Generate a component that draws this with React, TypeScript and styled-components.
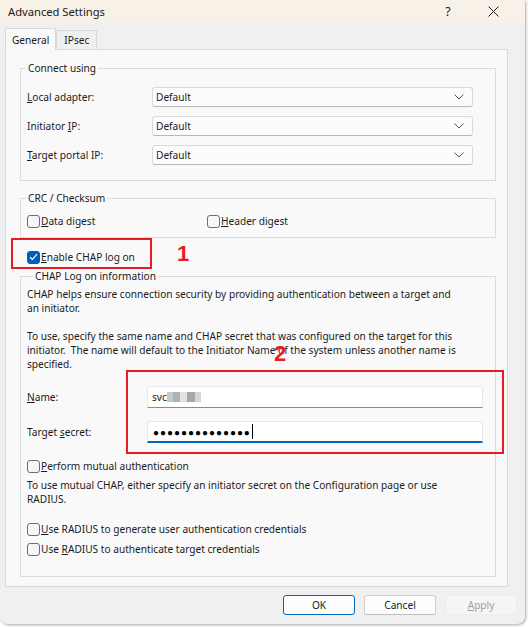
import React from 'react';
import styled, { createGlobalStyle } from 'styled-components';

const Global = createGlobalStyle`
  html, body { margin: 0; padding: 0; background: #ffffff; }
  body {
    font-family: "Noto Sans", "Liberation Sans", sans-serif;
    font-size: 10.15px;
    color: #1b1b1b;
  }
  #root { width: 532px; height: 627px; overflow: hidden; }
`;

const Window = styled.div`
  position: relative;
  width: 525px;
  height: 624px;
  background: #f0f0f0;
  border-radius: 0 0 8px 8px;
  box-shadow: 1px 1px 3px rgba(0, 0, 0, 0.35);
  display: flex;
  flex-direction: column;
`;

const TitleBar = styled.div`
  height: 22px;
  background: #f8f1e8;
  display: flex;
  align-items: center;
  padding: 0 9px 0 8px;
  font-size: 11.2px;
  color: #1a1a1a;
`;

const Title = styled.div`
  flex: 1;
`;

const TitleBtn = styled.div<{ $w: number }>`
  width: ${(p) => p.$w}px;
  display: flex;
  justify-content: center;
  align-items: center;
  font-size: 12.5px;
`;

const TabStrip = styled.div`
  display: flex;
  align-items: flex-end;
  height: 20px;
  margin: 7px 0 0 5px;
`;

const Tab = styled.div<{ $active?: boolean }>`
  height: ${(p) => (p.$active ? 21 : 18)}px;
  padding: 0 ${(p) => (p.$active ? 6 : 7)}px;
  display: flex;
  align-items: center;
  background: ${(p) => (p.$active ? '#f9f9f9' : '#f0f0f0')};
  border: 1px solid #d9d9d9;
  border-bottom: none;
  margin-bottom: ${(p) => (p.$active ? -1 : 0)}px;
  position: relative;
  z-index: ${(p) => (p.$active ? 1 : 0)};
  color: #1a1a1a;
`;

const TabPage = styled.div`
  margin-left: 5px;
  width: 476px;
  height: 536px;
  background: #f9f9f9;
  border: 1px solid #dadada;
  display: flex;
  flex-direction: column;
  padding: 0 11px 0 14px;
`;

const Group = styled.fieldset<{ $mt: number; $pt: number; $pb: number }>`
  margin: ${(p) => p.$mt}px 0 0 0;
  padding: ${(p) => p.$pt}px 0 ${(p) => p.$pb}px 6px;
  border: 1px solid #dcdcdc;
  min-width: 0;
`;

const Legend = styled.legend<{ $ml: number }>`
  margin-left: ${(p) => p.$ml}px;
  padding: 0 2px;
  line-height: 14px;
  height: 14px;
  color: #1a1a1a;
`;

const FieldRows = styled.div<{ $gap: number; $mt?: number }>`
  display: flex;
  flex-direction: column;
  gap: ${(p) => p.$gap}px;
  margin-top: ${(p) => p.$mt ?? 0}px;
`;

const FieldRow = styled.div`
  display: flex;
  align-items: center;
`;

const Label = styled.label<{ $w: number }>`
  width: ${(p) => p.$w}px;
  flex-shrink: 0;
`;

const Combo = styled.div`
  width: 321px;
  height: 20px;
  box-sizing: border-box;
  background: #fcfcfc;
  border: 1px solid #dadada;
  border-bottom-color: #b8b8b8;
  border-radius: 3px;
  display: flex;
  align-items: center;
  padding: 0 8px 0 3px;
  justify-content: space-between;
`;

const U = styled.span`
  text-decoration: underline;
  text-underline-offset: 1px;
`;

const CheckRow = styled.label<{ $mt?: number; $ml?: number }>`
  display: flex;
  align-items: center;
  height: 14px;
  margin-top: ${(p) => p.$mt ?? 0}px;
  margin-left: ${(p) => p.$ml ?? 0}px;
  gap: 1px;
`;

const Box = styled.span<{ $checked?: boolean }>`
  width: 13px;
  height: 13px;
  box-sizing: border-box;
  border-radius: 3px;
  border: 1px solid ${(p) => (p.$checked ? '#005fb8' : '#6e6e6e')};
  background: ${(p) => (p.$checked ? '#005fb8' : '#f6f6f6')};
  display: flex;
  align-items: center;
  justify-content: center;
  flex-shrink: 0;
`;

const CrcGrid = styled.div`
  display: grid;
  grid-template-columns: 180px 1fr;
`;

const Para = styled.p<{ $mt: number }>`
  margin: ${(p) => p.$mt}px 0 0 0;
  line-height: 14px;
  white-space: nowrap;
`;

const Input = styled.div<{ $focus?: boolean }>`
  width: 336px;
  height: 22px;
  box-sizing: border-box;
  background: #ffffff;
  border: 1px solid #e8e8e8;
  border-bottom: ${(p) => (p.$focus ? '2px solid #0067c0' : '1px solid #8a8a8a')};
  border-radius: 3px 3px 0 0;
  display: flex;
  align-items: center;
  padding-left: 4px;
`;

const Blur = styled.span<{ $c: string; $w: number }>`
  display: inline-block;
  width: ${(p) => p.$w}px;
  height: 10px;
  background: ${(p) => p.$c};
  filter: blur(0.6px);
`;

const Dots = styled.span`
  font-size: 10px;
  letter-spacing: 0.95px;
  color: #000;
  padding-left: 1px;
`;

const Caret = styled.span`
  width: 1px;
  height: 15px;
  background: #000;
  margin-left: 1px;
`;

const Footer = styled.div`
  display: flex;
  justify-content: flex-end;
  gap: 9px;
  padding: 8px 8px 0 0;
`;

const Button = styled.button<{ $primary?: boolean; $disabled?: boolean }>`
  width: 72px;
  height: 20px;
  box-sizing: border-box;
  font: inherit;
  font-size: 10.15px;
  border-radius: 3px;
  background: ${(p) => (p.$disabled ? '#f5f5f5' : '#fdfdfd')};
  border: 1px solid ${(p) => (p.$primary ? '#0067c0' : p.$disabled ? '#ececec' : '#d0d0d0')};
  border-bottom-color: ${(p) => (p.$primary ? '#0067c0' : p.$disabled ? '#ececec' : '#bdbdbd')};
  color: ${(p) => (p.$disabled ? '#a0a0a0' : '#1a1a1a')};
  padding: 0;
`;

const RedBox = styled.div<{ $x: number; $y: number; $w: number; $h: number }>`
  position: absolute;
  left: ${(p) => p.$x}px;
  top: ${(p) => p.$y}px;
  width: ${(p) => p.$w}px;
  height: ${(p) => p.$h}px;
  box-sizing: border-box;
  border: 2px solid #e81c24;
  pointer-events: none;
`;

const RedNum = styled.div<{ $x: number; $y: number }>`
  position: absolute;
  left: ${(p) => p.$x}px;
  top: ${(p) => p.$y}px;
  color: #e81c24;
  font-family: "Liberation Sans", Arial, sans-serif;
  font-weight: bold;
  font-size: 22px;
  line-height: 22px;
`;

const Chevron = () => (
  <svg width="10" height="6" viewBox="0 0 10 6">
    <polyline points="0.5,0.5 5,5 9.5,0.5" fill="none" stroke="#555" strokeWidth="1" />
  </svg>
);

const Check = () => (
  <svg width="9" height="8" viewBox="0 0 9 8">
    <polyline points="1,4.2 3.4,6.5 8,1.2" fill="none" stroke="#fff" strokeWidth="1.2" />
  </svg>
);

const Cb = ({ checked, children, mt, ml }: { checked?: boolean; children: React.ReactNode; mt?: number; ml?: number }) => (
  <CheckRow $mt={mt} $ml={ml}>
    <Box $checked={checked}>{checked && <Check />}</Box>
    <span>{children}</span>
  </CheckRow>
);

export default function App() {
  return (
    <>
      <Global />
      <Window>
        <TitleBar>
          <Title>Advanced Settings</Title>
          <TitleBtn $w={44}>?</TitleBtn>
          <TitleBtn $w={46}>
            <svg width="11" height="11" viewBox="0 0 11 11">
              <path d="M0.5 0.5 L10.5 10.5 M10.5 0.5 L0.5 10.5" stroke="#222" strokeWidth="1" />
            </svg>
          </TitleBtn>
        </TitleBar>
        <TabStrip>
          <Tab $active>General</Tab>
          <Tab>IPsec</Tab>
        </TabStrip>
        <TabPage>
          <Group $mt={11} $pt={12} $pb={15}>
            <Legend $ml={-1}>Connect using</Legend>
            <FieldRows $gap={9}>
              <FieldRow>
                <Label $w={125}><U>L</U>ocal adapter:</Label>
                <Combo>Default<Chevron /></Combo>
              </FieldRow>
              <FieldRow>
                <Label $w={125}>Initiator <U>I</U>P:</Label>
                <Combo>Default<Chevron /></Combo>
              </FieldRow>
              <FieldRow>
                <Label $w={125}><U>T</U>arget portal IP:</Label>
                <Combo>Default<Chevron /></Combo>
              </FieldRow>
            </FieldRows>
          </Group>
          <Group $mt={10} $pt={9} $pb={9}>
            <Legend $ml={-1}>CRC / Checksum</Legend>
            <CrcGrid>
              <Cb><U>D</U>ata digest</Cb>
              <Cb><U>H</U>eader digest</Cb>
            </CrcGrid>
          </Group>
          <Cb checked mt={12} ml={7}><U>E</U>nable CHAP log on</Cb>
          <Group $mt={5} $pt={4} $pb={20}>
            <Legend $ml={6}>CHAP Log on information</Legend>
            <Para $mt={0}>
              CHAP helps ensure connection security by providing authentication between a target and
              <br />
              an initiator.
            </Para>
            <Para $mt={14}>
              To use, specify the same name and CHAP secret that was configured on the target for this
              <br />
              initiator.&nbsp; The name will default to the Initiator Name of the system unless another name is
              <br />
              specified.
            </Para>
            <FieldRows $gap={13} $mt={15}>
              <FieldRow>
                <Label $w={120}><U>N</U>ame:</Label>
                <Input>
                  svc
                  <Blur $c="#c8c8c8" $w={6} />
                  <Blur $c="#b4b2b0" $w={7} />
                  <Blur $c="#e2e2e2" $w={7} />
                  <Blur $c="#a9a7a5" $w={8} />
                  <Blur $c="#d0d6da" $w={6} />
                </Input>
              </FieldRow>
              <FieldRow>
                <Label $w={120}>Target <U>s</U>ecret:</Label>
                <Input $focus>
                  <Dots>●●●●●●●●●●●●●●</Dots>
                  <Caret />
                </Input>
              </FieldRow>
            </FieldRows>
            <Cb mt={16}><U>P</U>erform mutual authentication</Cb>
            <Para $mt={5}>
              To use mutual CHAP, either specify an initiator secret on the Configuration page or use
              <br />
              RADIUS.
            </Para>
            <Cb mt={16}><U>U</U>se RADIUS to generate user authentication credentials</Cb>
            <Cb mt={6}>Use <U>R</U>ADIUS to authenticate target credentials</Cb>
          </Group>
        </TabPage>
        <Footer>
          <Button $primary>OK</Button>
          <Button>Cancel</Button>
          <Button $disabled><U>A</U>pply</Button>
        </Footer>
        <RedBox $x={11} $y={238} $w={141} $h={31} />
        <RedNum $x={177} $y={243}>1</RedNum>
        <RedBox $x={126} $y={370} $w={378} $h={84} />
        <RedNum $x={274} $y={343}>2</RedNum>
      </Window>
    </>
  );
}
